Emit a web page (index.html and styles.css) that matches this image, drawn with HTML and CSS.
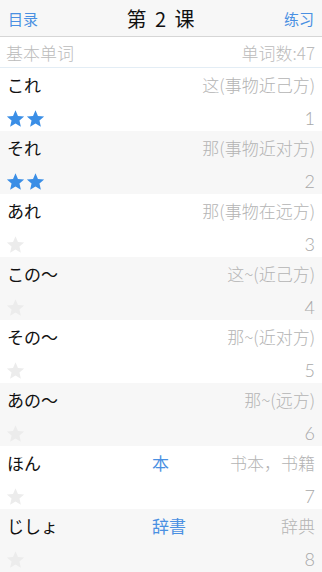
FILE: index.html
```html
<!DOCTYPE html>
<html lang="zh">
<head>
    <meta charset="UTF-8">
    <meta name="viewport" content="width=device-width, initial-scale=1.0">
    <title>第 2 课</title>
    <link rel="stylesheet" href="styles.css">
</head>
<body>
    <header class="nav-bar">
        <span class="nav-link">目录</span>
        <h1 class="nav-title">第 2 课</h1>
        <span class="nav-link">练习</span>
    </header>

    <div class="section-head">
        <span>基本单词</span>
        <span>单词数:47</span>
    </div>

    <ul id="wordList" class="word-list"></ul>

<script>
    const words = [
        { kana: "これ", kanji: "", meaning: "这(事物近己方)", stars: 2 },
        { kana: "それ", kanji: "", meaning: "那(事物近对方)", stars: 2 },
        { kana: "あれ", kanji: "", meaning: "那(事物在远方)", stars: 0 },
        { kana: "この～", kanji: "", meaning: "这~(近己方)", stars: 0 },
        { kana: "その～", kanji: "", meaning: "那~(近对方)", stars: 0 },
        { kana: "あの～", kanji: "", meaning: "那~(远方)", stars: 0 },
        { kana: "ほん", kanji: "本", meaning: "书本，书籍", stars: 0 },
        { kana: "じしょ", kanji: "辞書", meaning: "辞典", stars: 0 }
    ];

    const star = on => `<svg class="star ${on ? 'on' : ''}" viewBox="0 0 24 24"><path d="M12 1.5l3.1 7.2 7.8.7-5.9 5.2 1.8 7.7L12 18.2l-6.8 4.1 1.8-7.7-5.9-5.2 7.8-.7z"/></svg>`;

    document.getElementById('wordList').innerHTML = words.map((w, i) => `
        <li class="word-row">
            <div class="line top">
                <span class="kana">${w.kana}</span>
                <span class="kanji">${w.kanji}</span>
                <span class="meaning">${w.meaning}</span>
            </div>
            <div class="line bottom">
                <span class="stars">${star(w.stars > 0)}${w.stars > 1 ? star(true) : ''}</span>
                <span class="num">${i + 1}</span>
            </div>
        </li>
    `).join('');
</script>
</body>
</html>
```

FILE: styles.css
```css
body {
    margin: 0;
    padding: 0;
    background: #ffffff;
    font-family: 'Noto Sans CJK SC', 'Noto Sans CJK JP', sans-serif;
}

.nav-bar {
    height: 36px;
    display: flex;
    align-items: center;
    justify-content: space-between;
    padding: 0 8px;
    background: #f7f7f7;
    border-bottom: 1px solid #d6d6d6;
}

.nav-link {
    color: #4a90e2;
    font-size: 15px;
}

.nav-title {
    margin: 0;
    font-size: 20px;
    font-weight: normal;
    color: #111;
    letter-spacing: 1px;
    word-spacing: 2px;
}

.section-head {
    height: 30px;
    display: flex;
    align-items: center;
    justify-content: space-between;
    padding: 0 7px 0 6px;
    color: #bbbbbb;
    font-size: 17px;
    font-weight: 300;
    border-bottom: 1px solid #e3edf5;
}

.word-list {
    list-style: none;
    margin: 0;
    padding: 0;
}

.word-row {
    height: 63px;
    padding: 2px 7px 0 7px;
    box-sizing: border-box;
    display: flex;
    flex-direction: column;
    justify-content: space-between;
}

.word-row:nth-child(even) {
    background: #f7f7f7;
}

.line {
    display: flex;
    align-items: center;
}

.line.top {
    height: 28px;
}

.line.bottom {
    height: 26px;
}

.kana {
    width: 145px;
    font-size: 17px;
    color: #111;
}

.kanji {
    flex: 1;
    font-size: 17px;
    color: #4a90e2;
}

.meaning {
    font-size: 17px;
    color: #b4b4b4;
    font-weight: 300;
}

.stars {
    flex: 1;
    display: flex;
    gap: 1px;
    margin-left: -1px;
}

.star {
    width: 19px;
    height: 19px;
    fill: #ececec;
}

.star.on {
    fill: #3a8ee6;
}

.num {
    font-family: 'Lato', sans-serif;
    font-weight: 300;
    font-size: 18px;
    color: #a8a8a8;
}
```
